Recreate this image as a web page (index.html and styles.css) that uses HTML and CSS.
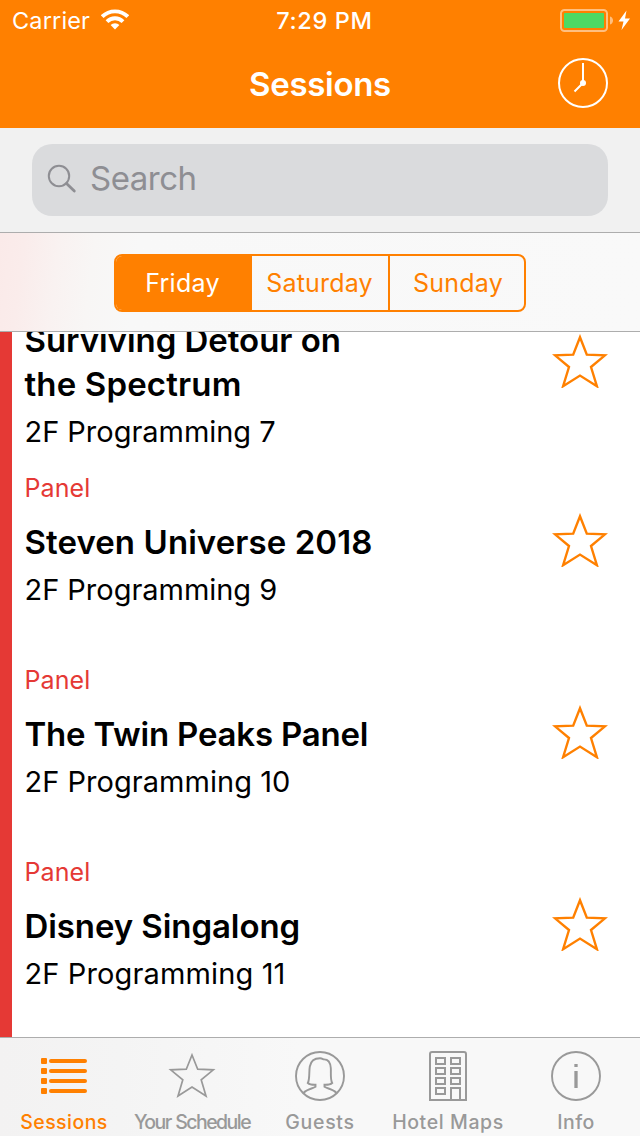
FILE: index.html
```html
<!DOCTYPE html>
<html lang="en">
<head>
<meta charset="utf-8">
<title>Sessions</title>
<link rel="stylesheet" href="styles.css">
</head>
<body>
<svg width="0" height="0" class="defs">
  <symbol id="star" viewBox="0 0 56 54">
    <path d="M28 3.2 L34.8 20.6 L53 21.3 L39 33 L44.9 52.2 L28 41.6 L11.1 52.2 L17 33 L3 21.3 L21.2 20.6 Z" fill="none" stroke="currentColor"/>
  </symbol>
</svg>
<div class="app">
  <header class="top">
    <div class="status">
      <div class="status-left">
        <span class="carrier">Carrier</span>
        <svg class="wifi" width="28" height="21" viewBox="0 0 28 21">
          <g fill="none" stroke="#fff" stroke-width="3.9">
            <path d="M1.2 7.6 A18.2 18.2 0 0 1 26.8 7.6"/>
            <path d="M6 12.6 A11.4 11.4 0 0 1 22 12.6"/>
          </g>
          <path d="M14 20.4 L9.6 16 A6.2 6.2 0 0 1 18.4 16 Z" fill="#fff"/>
        </svg>
      </div>
      <span class="time">7:29 PM</span>
      <svg class="battery" width="72" height="24" viewBox="0 0 72 24">
        <rect x="1" y="1" width="46" height="21" rx="3.5" fill="none" stroke="#ffbf80" stroke-width="2"/>
        <rect x="4" y="4" width="40" height="15" rx="1" fill="#4cd964"/>
        <path d="M50 7.5 C54 8.5 54 14.5 50 15.5 Z" fill="#ffbf80"/>
        <path d="M66.5 1.5 L58.5 12.5 H63.5 L61.5 21 L70 9.5 H65 Z" fill="#fff"/>
      </svg>
    </div>
    <div class="nav">
      <h1 class="nav-title">Sessions</h1>
      <svg class="clock" width="50" height="50" viewBox="0 0 50 50" fill="none" stroke="#fff" stroke-width="2">
        <circle cx="25" cy="25" r="24"/>
        <path d="M25 5 V25 L16.5 33.5"/>
        <circle cx="25" cy="25" r="3" fill="#fff" stroke="none"/>
      </svg>
    </div>
  </header>
  <div class="search-bar">
    <div class="search-field">
      <svg width="30" height="30" viewBox="0 0 30 30" fill="none" stroke="#8e8e93" stroke-linecap="round">
        <circle cx="12" cy="12" r="10.2" stroke-width="2"/>
        <path d="M19.5 19.5 L27.3 27" stroke-width="2.8"/>
      </svg>
      <span class="search-text">Search</span>
    </div>
  </div>
  <div class="days">
    <div class="segments">
      <div class="segment segment-on friday">Friday</div>
      <div class="segment saturday">Saturday</div>
      <div class="segment sunday">Sunday</div>
    </div>
  </div>
  <main class="list">
    <article class="session session-cut">
      <div class="session-body">
        <h2 class="session-title"><span class="t1">Surviving Detour on</span><br><span class="t2">the Spectrum</span></h2>
        <p class="room">2F Programming 7</p>
      </div>
      <svg class="star"><use href="#star"/></svg>
    </article>
    <article class="session">
      <div class="session-body">
        <p class="kind">Panel</p>
        <h2 class="session-title t3">Steven Universe 2018</h2>
        <p class="room">2F Programming 9</p>
      </div>
      <svg class="star"><use href="#star"/></svg>
    </article>
    <article class="session">
      <div class="session-body">
        <p class="kind">Panel</p>
        <h2 class="session-title t4">The Twin Peaks Panel</h2>
        <p class="room room-10">2F Programming 10</p>
      </div>
      <svg class="star"><use href="#star"/></svg>
    </article>
    <article class="session">
      <div class="session-body">
        <p class="kind">Panel</p>
        <h2 class="session-title t5">Disney Singalong</h2>
        <p class="room room-11">2F Programming 11</p>
      </div>
      <svg class="star"><use href="#star"/></svg>
    </article>
  </main>
  <nav class="tabs">
    <div class="tab tab-on">
      <svg width="50" height="50" viewBox="0 0 50 50" fill="currentColor">
        <rect x="2" y="7" width="6" height="6" rx="1"/><rect x="10" y="8" width="38" height="4" rx="2"/>
        <rect x="2" y="17" width="6" height="6" rx="1"/><rect x="10" y="18" width="38" height="4" rx="2"/>
        <rect x="2" y="27" width="6" height="6" rx="1"/><rect x="10" y="28" width="38" height="4" rx="2"/>
        <rect x="2" y="37" width="6" height="6" rx="1"/><rect x="10" y="38" width="38" height="4" rx="2"/>
      </svg>
      <span class="l1">Sessions</span>
    </div>
    <div class="tab">
      <svg width="50" height="50" viewBox="0 0 50 50" fill="none" stroke="currentColor" stroke-width="1.7">
        <path d="M25 4 L30.7 18.2 L46.3 18.8 L34.2 28.8 L39 45 L25 36 L11 45 L15.8 28.8 L3.7 18.8 L19.3 18.2 Z"/>
      </svg>
      <span class="l2">Your Schedule</span>
    </div>
    <div class="tab">
      <svg width="50" height="50" viewBox="0 0 50 50" fill="none" stroke="currentColor" stroke-width="1.9">
        <circle cx="25" cy="25" r="24"/>
        <path d="M8.5 42 C11 38.5 18 37.5 20.5 35.8 V33.8 C17.5 33.9 14.5 33.5 12.8 32 C15 28 13.8 21 14.8 15.5 C16 9 21 7.3 25 7.3 C27 7.3 28 8.2 28.7 8.4 C33.5 8.2 35.4 12 35.8 17 C36.2 22 35 28 37.2 32 C35.5 33.5 32.5 33.9 29.5 33.8 V35.8 C32 37.5 39 38.5 41.5 42"/>
      </svg>
      <span class="l3">Guests</span>
    </div>
    <div class="tab">
      <svg width="50" height="50" viewBox="0 0 50 50" fill="none" stroke="currentColor" stroke-width="2">
        <path d="M7 49 V3 Q7 1 9 1 H41 Q43 1 43 3 V49 Z"/>
        <path d="M13 7 H22 V13 H13 Z M28 7 H37 V13 H28 Z M13 17 H22 V23 H13 Z M28 17 H37 V23 H28 Z M13 27 H22 V33 H13 Z M28 27 H37 V33 H28 Z M13 37 H22 V43 H13 Z M28 49 V37 H37 V49"/>
      </svg>
      <span class="l4">Hotel Maps</span>
    </div>
    <div class="tab">
      <svg width="50" height="50" viewBox="0 0 50 50" fill="none" stroke="currentColor" stroke-width="1.9">
        <circle cx="25" cy="25" r="24"/>
        <path d="M25 13 V16 M25 20 V37" stroke-width="3.3"/>
      </svg>
      <span class="l5">Info</span>
    </div>
  </nav>
</div>
</body>
</html>
```
FILE: styles.css
```css
* { box-sizing: border-box; margin: 0; padding: 0; }
body { font-family: Inter, "Liberation Sans", sans-serif; background: #fff; color: #000; }
svg { display: block; flex: none; }
.defs { position: absolute; }
.app { width: 640px; height: 1136px; display: flex; flex-direction: column; overflow: hidden; }

.top { height: 128px; background: #ff8000; color: #fff; flex: none; }
.status { height: 40px; display: grid; grid-template-columns: 1fr auto 1fr; align-items: center; padding: 1px 8px 0 12px; }
.status-left { display: flex; align-items: center; gap: 11px; font-size: 23.5px; letter-spacing: 0.15px; line-height: 40px; }
.wifi { margin-bottom: 3px; }
.time { font-size: 23.5px; font-weight: 500; letter-spacing: 0.65px; line-height: 40px; padding-left: 5px; }
.battery { justify-self: end; }
.nav { height: 88px; display: grid; grid-template-columns: 1fr auto 1fr; align-items: center; padding: 0 32px; }
.nav-title { grid-column: 2; font-size: 33px; font-weight: 600; line-height: 44px; letter-spacing: -0.3px; }
.clock { justify-self: end; margin-bottom: 2px; }

.search-bar { height: 105px; flex: none; background: #f1f1f1; border-bottom: 1px solid #adadad; padding: 16px 32px; }
.search-field { height: 72px; border-radius: 20px; background: #dadbdd; display: flex; align-items: center; gap: 13px; padding: 0 0 2px 15px; color: #8e8e93; }
.search-text { font-size: 33px; line-height: 44px; letter-spacing: -0.5px; padding-bottom: 2px; }

.days { height: 99px; flex: none; border-bottom: 1px solid #adadad; padding-top: 21px; display: flex; justify-content: center; align-items: flex-start; background: linear-gradient(97deg, #faeae9 0, #faeceb 25px, #f9f2f1 60px, #f8f6f5 95px, #f8f8f8 140px, #f9f9f9 100%); }
.segments { display: flex; width: 412px; height: 58px; border: 2px solid #ff8000; border-radius: 8px; font-size: 25px; line-height: 54px; color: #ff8000; overflow: hidden; background-clip: padding-box; }
.segment { text-align: center; flex: none; letter-spacing: 0.2px; }
.segment-on { background: #ff8000; color: #fff; }
.friday { width: 136px; padding-right: 3px; letter-spacing: 0.3px; }
.saturday { width: 138px; border-right: 2px solid #ff8000; padding-right: 1px; }
.sunday { width: 134px; padding-left: 2px; }

.list { height: 705px; flex: none; overflow: hidden; border-left: 12px solid #e53935; }
.session { height: 192px; display: flex; justify-content: space-between; padding: 12px 32px 0 12.5px; }
.session-cut { height: 143px; margin-top: -14px; padding-top: 0; }
.kind { font-size: 25px; line-height: 30px; color: #e53935; margin-bottom: 17px; letter-spacing: 0.1px; }
.session-title { font-size: 33px; line-height: 44px; font-weight: 600; white-space: nowrap; }
.t1 { letter-spacing: -0.04px; }
.t2 { letter-spacing: 0.15px; }
.t3 { letter-spacing: 0.08px; }
.t4 { letter-spacing: -0.2px; }
.t5 { letter-spacing: -0.08px; }
.room { font-size: 29px; line-height: 36px; margin-top: 8px; letter-spacing: -0.03px; }
.room-10 { letter-spacing: 0.03px; }
.room-11 { letter-spacing: 0.13px; }
.star { width: 56px; height: 54px; margin-top: 40px; color: #ff8000; stroke-width: 2.4; }
.session-cut .star { margin-top: 16px; }

.tabs { height: 99px; flex: none; border-top: 1px solid #adadad; display: grid; grid-template-columns: repeat(5, 128px); background: linear-gradient(90deg, #f3f2f2 0, #f4f4f4 120px, #f8f8f8 300px, #f8f8f8 100%); color: #999; }
.tab { display: flex; flex-direction: column; align-items: center; padding-top: 13px; font-size: 19.5px; font-weight: 500; line-height: 24px; gap: 9px; white-space: nowrap; }
.tab-on { color: #ff8000; }
.l1 { letter-spacing: 0.45px; }
.l2 { letter-spacing: -1.55px; word-spacing: 1px; }
.l3 { letter-spacing: 0.7px; }
.l4 { letter-spacing: 0.6px; }
.l5 { letter-spacing: 0.5px; }
```
